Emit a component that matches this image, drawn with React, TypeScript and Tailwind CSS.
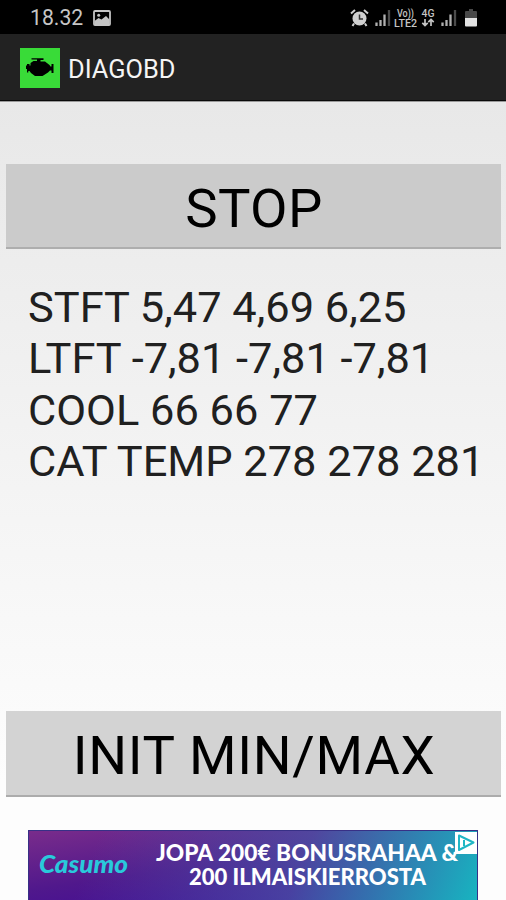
import React from "react";

const READINGS = [
  "STFT 5,47 4,69 6,25",
  "LTFT -7,81 -7,81 -7,81",
  "COOL 66 66 77",
  "CAT TEMP 278 278 281",
];

function PictureIcon() {
  return (
    <svg className="ml-[9px] mt-[1px] h-[16px] w-[18px]" viewBox="0 0 18 16">
      <rect x="1" y="1" width="16" height="14" rx="1" fill="none" stroke="#c4c4c4" strokeWidth="1.8" />
      <path d="M1.5 11 5.5 8l3 1.500L13 6l3.5 3.5V15h-15z" fill="#c4c4c4" />
      <circle cx="5.7" cy="5.2" r="1.5" fill="#c4c4c4" />
    </svg>
  );
}

function AlarmIcon() {
  return (
    <svg className="h-[18px] w-[19px]" viewBox="0 0 19 18">
      <path d="M1 4.5 5 1M18 4.5 14 1M4 14.5 2.5 17M15 14.5l1.5 2.5" stroke="#d0d0d0" strokeWidth="2" />
      <circle cx="9.5" cy="9.5" r="7" fill="#d0d0d0" />
      <path d="M9.5 5.5v4.5h3.500" fill="none" stroke="#333" strokeWidth="1.5" />
    </svg>
  );
}

function SignalIcon({ className }: { className: string }) {
  return (
    <svg className={className} viewBox="0 0 16 18">
      <path d="M1.5 17v-3.5M5.5 17v-6M9.5 17V5.5" stroke="#b0b0b0" strokeWidth="2.3" />
      <path d="M14 17V1" stroke="#4b4b4b" strokeWidth="2.3" />
    </svg>
  );
}

function StatusBar() {
  return (
    <div className="flex h-[34px] items-center bg-black pl-[30px] pr-[29px] text-[#c6c6c6]">
      <span className="w-[54px] whitespace-nowrap pt-[2px] text-[21.2px] leading-[34px]">18.32</span>
      <PictureIcon />
      <div className="ml-auto flex items-center pt-[2px]">
        <AlarmIcon />
        <SignalIcon className="ml-[6px] h-[18px] w-[16px]" />
        <svg className="ml-[3px] h-[20px] w-[23px]" viewBox="0 0 23 20">
          <g fill="#c4c4c4" fontFamily="Roboto, sans-serif" fontWeight="500">
            <text x="3" y="8.5" fontSize="10" textLength="17" lengthAdjust="spacingAndGlyphs">Vo))</text>
            <text x="0" y="18.5" fontSize="10.5" textLength="23" lengthAdjust="spacingAndGlyphs">LTE2</text>
          </g>
        </svg>
        <svg className="ml-[4px] h-[20px] w-[14px]" viewBox="0 0 14 20">
          <text x="0.5" y="9" fill="#c4c4c4" fontFamily="Roboto, sans-serif" fontWeight="500" fontSize="10.5" textLength="13" lengthAdjust="spacingAndGlyphs">4G</text>
          <path d="M4 11v6M1.3 14.8 4 17.5l2.7-2.7M10 18v-6M7.3 14.2 10 11.5l2.7 2.7" fill="none" stroke="#c4c4c4" strokeWidth="1.7" />
        </svg>
        <SignalIcon className="ml-[6px] h-[18px] w-[16px]" />
        <svg className="ml-[8px] h-[18px] w-[12px]" viewBox="0 0 12 18">
          <path d="M4 0h4v2h3q1 0 1 1v7H0V3q0-1 1-1h3z" fill="#484848" />
          <path d="M0 9h12v7.5q0 1-1 1H1q-1 0-1-1z" fill="#e2e2e2" />
        </svg>
      </div>
    </div>
  );
}

function EngineIcon() {
  return (
    <svg className="h-[40px] w-[40px] bg-[#39db38]" viewBox="0 0 40 40">
      <path d="M11.500 10.300H23.500v1.700h-3v1.500h4.500l4.500 3.500 1 1.500h1v-2.500H33.500v9h-2v-2.500h-1.500l-2 2-5.500 3.500H15l-4-3-1.500-2H8.300v1.500H7v-3.500H6v-3.500h1v-1.500h2.500v1.500h1v-2.500l3-2h3.500v-1.500h-5.500z" fill="#000" />
    </svg>
  );
}

function Advert() {
  return (
    <div className="relative flex h-[70px] w-[450px] items-start overflow-hidden border-x border-t border-[#373086] bg-[linear-gradient(172deg,#792c8b_0%,#50188c_45%,#38059a_100%)]">
      <div className="absolute inset-0 bg-[linear-gradient(112deg,transparent_15%,#4b5aa8aa_60%,#18b4c0_100%)]" />
      <svg className="absolute left-0 top-0 h-[69px] w-[448px]" viewBox="0 0 448 69">
        <text x="10" y="42" fill="#29c9db" fontFamily="Lato, sans-serif" fontStyle="italic" fontWeight="900" fontSize="25" textLength="89" lengthAdjust="spacingAndGlyphs">Casumo</text>
        <g fill="#fff" fontFamily="Lato, sans-serif" fontWeight="900">
          <text x="127" y="29.5" fontSize="22.5" textLength="302" lengthAdjust="spacingAndGlyphs">JOPA 200€ BONUSRAHAA &amp;</text>
          <text x="160" y="53.5" fontSize="22.5" textLength="237" lengthAdjust="spacingAndGlyphs">200 ILMAISKIERROSTA</text>
        </g>
      </svg>
      <svg className="absolute right-0 top-[1px] h-[22px] w-[22px] bg-white" viewBox="0 0 22 22">
        <path d="M4 3.5 18.5 10.5 4 18z" fill="none" stroke="#20b6c5" strokeWidth="2" strokeLinejoin="round" />
        <path d="M9 8v6" stroke="#20b6c5" strokeWidth="2" />
      </svg>
    </div>
  );
}

export default function App() {
  return (
    <div className="flex h-[900px] w-[506px] flex-col overflow-hidden bg-white font-[Roboto,sans-serif]">
      <StatusBar />
      <header className="flex h-[67px] shrink-0 items-center border-b border-[#090909] bg-[#222] pl-5 pt-[2px] text-[#f5f5f5]">
        <EngineIcon />
        <h1 className="ml-2 pt-[3px] text-[25.4px] leading-none">DIAGOBD</h1>
      </header>
      <main className="flex flex-1 flex-col border-t border-[#999] bg-[linear-gradient(#e8e8e8,#efefef_28%,#fdfdfd_85%)] px-[6px]">
        <button className="mt-[62px] h-[85px] w-[495px] shrink-0 border-b-2 border-[#aeaeae] bg-[#cbcbcb] pl-px pt-[5px] text-[54.5px] leading-none tracking-[0.4px] text-black">
          STOP
        </button>
        <div className="mt-[32.5px] h-[206px] shrink-0 whitespace-pre pl-[22px] text-[43.4px] leading-[51.5px] text-[#202020]">
          {READINGS.map((reading) => (
            <div key={reading}>{reading}</div>
          ))}
        </div>
        <button className="mt-[223.5px] h-[86px] w-[495px] shrink-0 border-b-2 border-[#acacac] bg-[#d3d3d3] pl-px pt-[4px] text-[54.5px] leading-none tracking-[0.7px] text-black">
          INIT MIN/MAX
        </button>
        <div className="mt-[33px] pl-[22px]">
          <Advert />
        </div>
      </main>
    </div>
  );
}
